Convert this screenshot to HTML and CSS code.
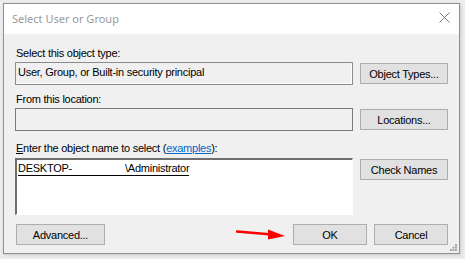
FILE: index.html
```html
<!DOCTYPE html>
<html>
<head>
<meta charset="utf-8">
<link rel="stylesheet" href="styles.css">
</head>
<body>
<div class="window">
  <div class="titlebar">
    <span class="title">Select User or Group</span>
    <svg class="close" width="11" height="11" viewBox="0 0 11 11"><path d="M0.5 0.5 L10.5 10.5 M10.5 0.5 L0.5 10.5" stroke="#7a7a7a" stroke-width="1" fill="none"/></svg>
  </div>
  <div class="content">
    <div class="label l1">Select this object type:</div>
    <div class="row">
      <div class="field readonly">User, Group, or Built-in security principal</div>
      <div class="btn">Object Types...</div>
    </div>
    <div class="label l2">From this location:</div>
    <div class="row">
      <div class="field">&nbsp;</div>
      <div class="btn">Locations...</div>
    </div>
    <div class="label l3"><u>E</u>nter the object name to select (<a class="link">examples</a>):</div>
    <div class="row top">
      <div class="field big"><span class="name"><span>DESKTOP-</span><span class="gap"></span><span>\Administrator</span></span></div>
      <div class="btn">Check Names</div>
    </div>
    <div class="bottom">
      <div class="btn adv">Advanced...</div>
      <div class="spacer"></div>
      <div class="btn small">OK</div>
      <div class="btn small">Cancel</div>
    </div>
    <svg class="arrow" width="52" height="14" viewBox="0 0 52 14"><path d="M1 3.5 L36 6.5" stroke="#f00" stroke-width="2.6" fill="none" stroke-linecap="round"/><path d="M32 1.5 L49 8 L32 11.5 Z" fill="#f00"/></svg>
    <svg class="grip" width="7" height="7" viewBox="0 0 7 7"><g fill="#a8a8a8"><rect x="5" y="0" width="2" height="2"/><rect x="2.5" y="2.5" width="2" height="2"/><rect x="5" y="2.5" width="2" height="2"/><rect x="0" y="5" width="2" height="2"/><rect x="2.5" y="5" width="2" height="2"/><rect x="5" y="5" width="2" height="2"/></g></svg>
  </div>
</div>
</body>
</html>
```

FILE: styles.css
```css
html, body {
  margin: 0;
  padding: 0;
}
body {
  background: #ececec;
  width: 465px;
  height: 259px;
  overflow: hidden;
}
.window {
  margin: 3px 0 0 3px;
  width: 455px;
  height: 249px;
  border: 1px solid #8f8f8f;
  background: #f0f0f0;
  display: flex;
  flex-direction: column;
  box-shadow: 1px 1px 3px rgba(0,0,0,0.15);
}
.titlebar {
  height: 30px;
  background: #fff;
  display: flex;
  align-items: center;
  justify-content: space-between;
  padding: 0 9px 0 8px;
}
.title {
  font-family: "Noto Sans", "Open Sans", sans-serif;
  font-size: 11px;
  color: #999;
  margin-top: -2px;
}
.close {
  margin-top: -3px;
}
.content {
  position: relative;
  flex: 1;
  padding: 13px 11px 0 11px;
  font-family: "Liberation Sans", Arial, sans-serif;
  font-size: 11px;
  letter-spacing: -0.25px;
  color: #000;
}
.label {
  height: 13px;
  line-height: 13px;
  padding-left: 1px;
}
.l1 { margin-bottom: 2px; }
.l2 { margin-top: 8px; margin-bottom: 2px; }
.l3 { margin-top: 11px; margin-bottom: 3px; }
.row {
  display: flex;
  align-items: center;
  gap: 7px;
}
.row.top { align-items: flex-start; }
.field {
  width: 338px;
  height: 23px;
  box-sizing: border-box;
  border: 1px solid #7a7a7a;
  background: #f0f0f0;
  line-height: 19px;
  padding-left: 2px;
  white-space: nowrap;
}
.field.readonly {
  border-color: #8c8c8c;
  box-shadow: inset -1px -1px 0 #fff;
}
.field.big {
  height: 57px;
  background: #fff;
  border-width: 2px 1px 1px 2px;
  border-style: solid;
  border-color: #6e6e6e #ffffff #ffffff #6e6e6e;
  padding-left: 1px;
  line-height: 14px;
  padding-top: 1px;
}
.name {
  display: inline-flex;
  border-bottom: 1px solid #000;
  line-height: 13px;
}
.gap {
  width: 53px;
}
.btn {
  width: 88px;
  height: 21px;
  box-sizing: border-box;
  background: #e1e1e1;
  border: 1px solid #adadad;
  display: flex;
  align-items: center;
  justify-content: center;
  flex: none;
}
.row.top .btn { margin-top: 1px; }
.link {
  color: #0066cc;
  text-decoration: underline;
}
.bottom {
  display: flex;
  gap: 7px;
  margin-top: 9px;
}
.btn.adv {
  width: 89px;
  margin-left: 1px;
}
.btn.small {
  width: 74px;
}
.spacer { flex: 1; }
.arrow {
  position: absolute;
  left: 232px;
  top: 194px;
}
.grip {
  position: absolute;
  right: 2px;
  bottom: 2px;
}
```
